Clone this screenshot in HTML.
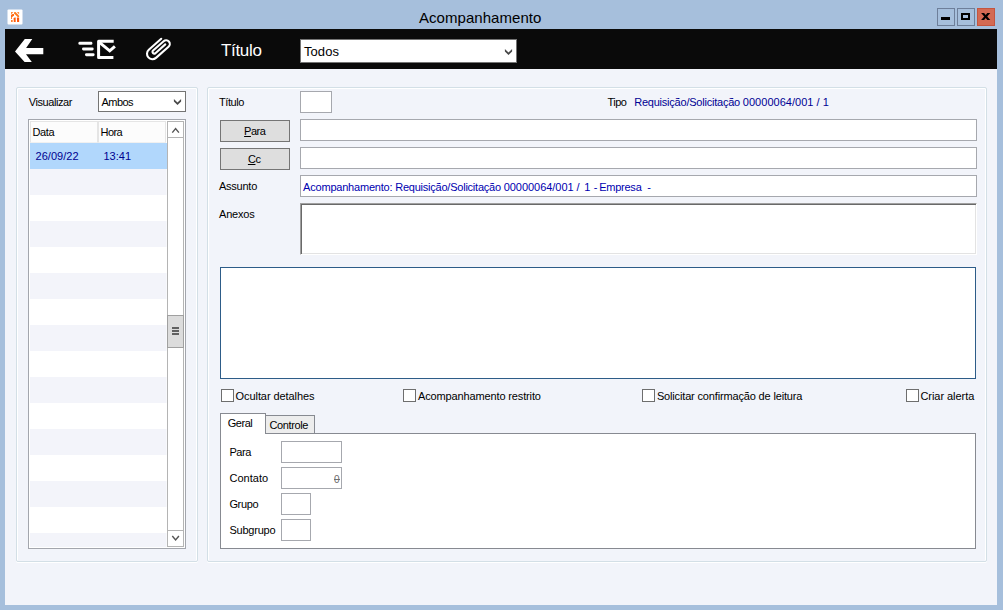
<!DOCTYPE html>
<html lang="pt-BR">
<head>
<meta charset="utf-8">
<title>Acompanhamento</title>
<style>
*{box-sizing:border-box;margin:0;padding:0}
html,body{width:1003px;height:610px;overflow:hidden;background:#a6bfdc}
body{position:relative;font-family:"Liberation Sans",sans-serif;font-size:11px;color:#000;line-height:1}
.abs{position:absolute}
.grp{position:absolute;left:0;top:0;width:0;height:0}
.t{position:absolute;white-space:pre}
#content{left:5px;top:29px;width:992px;height:576px;background:#f2f4fa}
#toolbar{left:5px;top:29px;width:992px;height:40px;background:#0a0a0a}
.wbtn{top:8px;width:18px;height:18px;border:1px solid #6e7f9a}
.inp{position:absolute;background:#fff;border:1px solid #a6a8ae}
.gb{position:absolute;border:1px solid #d3dfe6;border-radius:2px;box-shadow:inset 1px 1px 0 #fff, inset -1px 0 0 #fff, 0 1px 0 #fff}
.btn{position:absolute;background:#dedede;border:1px solid #757575}
.cb{position:absolute;width:13px;height:13px;background:#fff;border:1px solid #6e6e6e;top:389px}
.row{position:absolute;left:30px;width:136px;height:26px;background:#f3f4fa;box-shadow:1px 0 0 #f8f9fc}
.sb{position:absolute;left:167px;width:17px;background:#fff;border:1px solid #b4b4b4}
u{text-decoration:underline;text-underline-offset:1px}
</style>
</head>
<body>
<header class="grp" id="titlebar">
<svg class="abs" style="left:7px;top:9px" width="16" height="16" viewBox="0 0 16 16">
<rect x="0.5" y="0.4" width="15" height="15" rx="1" fill="#fff"/>
<g fill="#ff6a13">
<path d="M4 3 H6.4 L4 5.6 Z" fill="#ff8a3a"/>
<path d="M9.9 3 H12.1 V5.4 Z" fill="#ff8f45"/>
<path d="M7 3.2 L8.5 3 L12.1 6.7 V8 H10.7 L7 4.6 Z" fill="#ff7a1c"/>
<path d="M4 6.1 L5.6 4.9 H7 V6.2 L4.4 9 H4 Z"/>
<path d="M4 9 L5 8.6 V10 H4 Z" fill="#ff7d2e"/>
<path d="M4 11 H5.7 V13 H4 Z" fill="#ff7d2e"/>
<path d="M6.6 9.4 L7.5 8.5 H8.7 V13 H6.8 Z" fill="#ff5a0a"/>
<path d="M9.9 8.5 H12.1 V13 H10.1 Z" fill="#ff5408"/>
</g>
</svg>
<div class="t" style="left:419px;top:9px;line-height:17px;height:17px;font-size:15px;letter-spacing:0.046px;">Acompanhamento</div>
<div class="abs wbtn" style="left:937px"><div class="abs" style="left:3px;top:8px;width:9px;height:3px;background:#000"></div></div>
<div class="abs wbtn" style="left:957px"><div class="abs" style="left:3px;top:4px;width:9px;height:7px;border:2px solid #000"></div></div>
<div class="abs wbtn" style="left:977px;background:#d36a53;border-color:#c4553f">
<svg class="abs" style="left:0;top:0" width="16" height="16" viewBox="0 0 16 16"><path d="M3.1 3.9 h3 l1.6 2.1 l1.6 -2.1 h3 l-3.1 3.6 l3.1 3.6 h-3 l-1.6 -2.1 l-1.6 2.1 h-3 l3.1 -3.6 z" fill="#000"/></svg>
</div>
</header>
<div id="content" class="abs"></div>
<div id="toolbar" class="abs"></div>
<nav class="grp" id="toolbar-items">
<svg class="abs" style="left:5px;top:29px" width="200" height="40" viewBox="5 29 200 40">
<polygon fill="#fff" points="15,51.6 24.8,38.9 32.3,38.9 26.1,47.9 43.3,47.9 43.3,54.2 26,54.2 31.8,62.1 24.6,62.1"/>
<g fill="#fff">
<rect x="78.4" y="41.8" width="14" height="3" rx="1.4"/><rect x="82" y="47.5" width="11.7" height="3" rx="1.4"/><rect x="85" y="53.2" width="9.6" height="3" rx="1.4"/>
</g>
<g stroke="#fff" stroke-width="3" fill="none" stroke-linejoin="round">
<path d="M113.7 41.3 H98.6 V57.5 H113.4"/>
<path d="M99.4 42.4 L109.7 50.8 L114.9 46.3" stroke-linejoin="miter"/>
</g>
<g transform="translate(158 49) rotate(-41.6)" stroke="#fff" stroke-width="2.1" fill="none" stroke-linecap="round">
<path d="M9.2 -5.5 H-7.4 A5.4 5.4 0 0 0 -7.4 5.3 H9.4 A3.7 3.7 0 0 0 9.4 -2.1 H-4.7 A1.75 1.75 0 0 0 -4.7 1.4 H8.5"/>
</g>
</svg>
<div class="t" style="left:221px;top:41px;line-height:19px;height:19px;font-size:17px;letter-spacing:-0.322px;color:#fff;">Título</div>
<div class="abs" style="left:300px;top:39px;width:217px;height:24px;background:#fff;border:1px solid #747474"></div>
<div class="t" style="left:304px;top:44px;line-height:15px;height:15px;font-size:13px;letter-spacing:0.059px;">Todos</div>
<svg class="abs" style="left:503px;top:46px" width="12" height="12" viewBox="0 0 12 12"><polygon points="1.9,2.9 5.5,6.4 9.1,2.9 9.1,5.5 5.5,9 1.9,5.5" fill="#484848"/></svg>
</nav>
<section class="grp" id="history">
<div class="gb" style="left:16px;top:87px;width:182px;height:475px"></div>
<div class="t" style="left:28.7px;top:96px;line-height:12px;height:12px;letter-spacing:-0.410px;">Visualizar</div>
<div class="abs" style="left:98px;top:91px;width:88px;height:21px;background:#fff;border:1px solid #747474"></div>
<div class="t" style="left:101.5px;top:96px;line-height:12px;height:12px;letter-spacing:-0.550px;">Ambos</div>
<svg class="abs" style="left:172px;top:96px" width="12" height="12" viewBox="0 0 12 12"><polygon points="1.9,2.9 5.5,6.4 9.1,2.9 9.1,5.5 5.5,9 1.9,5.5" fill="#484848"/></svg>
<div class="abs" style="left:28px;top:119px;width:158px;height:430px;background:#fff;border:1px solid #a3a6ad"></div>
<div class="abs" style="left:30px;top:121px;width:68px;height:22px;background:#fcfcfc;border:1px solid #e5e5e5;border-bottom-color:#f0f0f0"></div>
<div class="abs" style="left:98px;top:121px;width:68px;height:22px;background:#fcfcfc;border:1px solid #e5e5e5;border-bottom-color:#f0f0f0"></div>
<div class="t" style="left:32.5px;top:126px;line-height:12px;height:12px;letter-spacing:-0.412px;">Data</div>
<div class="t" style="left:100.5px;top:126px;line-height:12px;height:12px;letter-spacing:-0.561px;">Hora</div>
<div class="row" style="top:143px;width:137px;background:#b1d7fc"></div>
<div class="row" style="top:169px;height:26px"></div>
<div class="row" style="top:221px;height:26px"></div>
<div class="row" style="top:273px;height:26px"></div>
<div class="row" style="top:325px;height:26px"></div>
<div class="row" style="top:377px;height:26px"></div>
<div class="row" style="top:429px;height:26px"></div>
<div class="row" style="top:481px;height:26px"></div>
<div class="row" style="top:533px;height:14px"></div>
<div class="t" style="left:35.5px;top:150px;line-height:12px;height:12px;letter-spacing:0.046px;color:#000090;">26/09/22</div>
<div class="t" style="left:103.5px;top:150px;line-height:12px;height:12px;letter-spacing:-0.006px;color:#000090;">13:41</div>
<div class="sb" style="top:121px;height:426px"></div>
<div class="sb" style="top:121px;height:17px"></div>
<div class="sb" style="top:530px;height:17px"></div>
<svg class="abs" style="left:167px;top:121px" width="17" height="17" viewBox="0 0 17 17"><path d="M5.3 11.6 L8.6 7.6 L11.9 11.6" stroke="#555" stroke-width="1.4" fill="none"/></svg>
<svg class="abs" style="left:167px;top:530px" width="17" height="17" viewBox="0 0 17 17"><path d="M5.3 6 L8.6 10 L11.9 6" stroke="#555" stroke-width="1.4" fill="none"/></svg>
<div class="abs" style="left:167px;top:315px;width:17px;height:33px;background:#dcdcdc;border:1px solid #a0a0a0"></div>
<div class="abs" style="left:172px;top:327px;width:7px;height:2px;background:#606060"></div>
<div class="abs" style="left:172px;top:330px;width:7px;height:2px;background:#606060"></div>
<div class="abs" style="left:172px;top:333px;width:7px;height:2px;background:#606060"></div>
</section>
<section class="grp" id="message">
<div class="gb" style="left:207px;top:87px;width:780px;height:475px"></div>
<div class="t" style="left:219px;top:96px;line-height:12px;height:12px;letter-spacing:-0.419px;">Título</div>
<div class="inp" style="left:300px;top:91px;width:32px;height:22px"></div>
<div class="t" style="left:607.6px;top:96px;line-height:12px;height:12px;letter-spacing:-0.550px;">Tipo</div>
<div class="t" style="left:634.2px;top:96px;line-height:12px;height:12px;color:#000094;"><span style="letter-spacing:-0.223px">Requisição/Solicitação </span><span style="letter-spacing:0.029px">00000064/001 </span><span style="letter-spacing:-0.012px">/ </span><span style="letter-spacing:-0.025px">1</span></div>
<div class="btn" style="left:220px;top:120px;width:70px;height:22px"></div>
<div class="t" style="left:244.1px;top:125px;line-height:12px;height:12px;letter-spacing:-0.513px;"><u>P</u>ara</div>
<div class="inp" style="left:300px;top:119px;width:677px;height:22px"></div>
<div class="btn" style="left:220px;top:148px;width:70px;height:22px"></div>
<div class="t" style="left:247.9px;top:153px;line-height:12px;height:12px;letter-spacing:-0.377px;"><u>C</u>c</div>
<div class="inp" style="left:300px;top:147px;width:677px;height:22px"></div>
<div class="t" style="left:219px;top:180px;line-height:12px;height:12px;letter-spacing:-0.250px;">Assunto</div>
<div class="inp" style="left:300px;top:175px;width:677px;height:22px"></div>
<div class="t" style="left:303.1px;top:181px;line-height:12px;height:12px;color:#0000b0;"><span style="letter-spacing:-0.206px">Acompanhamento: </span><span style="letter-spacing:-0.228px">Requisição/Solicitação </span><span style="letter-spacing:-0.040px">00000064/001 </span><span style="letter-spacing:0.787px">/ </span><span style="letter-spacing:0.156px">1 </span><span style="letter-spacing:-0.667px">- </span><span style="letter-spacing:-0.238px">Empresa  </span><span style="letter-spacing:0.028px">-</span></div>
<div class="t" style="left:219px;top:208px;line-height:12px;height:12px;letter-spacing:-0.201px;">Anexos</div>
<div class="abs" style="left:300px;top:203px;width:677px;height:52px;background:#fff;border:1px solid;border-color:#a0a0a0 #fff #fff #a0a0a0;box-shadow:inset 1px 1px 0 #696969, inset -1px -1px 0 #e3e3e3"></div>
<div class="abs" style="left:220px;top:267px;width:756px;height:112px;background:#fff;border:1px solid #2d5c88"></div>
<div class="cb" style="left:221px"></div>
<div class="t" style="left:235.6px;top:390px;line-height:12px;height:12px;letter-spacing:-0.082px;">Ocultar detalhes</div>
<div class="cb" style="left:403px"></div>
<div class="t" style="left:418px;top:390px;line-height:12px;height:12px;letter-spacing:-0.137px;">Acompanhamento restrito</div>
<div class="cb" style="left:642px"></div>
<div class="t" style="left:656.9px;top:390px;line-height:12px;height:12px;letter-spacing:-0.156px;">Solicitar confirmação de leitura</div>
<div class="cb" style="left:906px"></div>
<div class="t" style="left:920.4px;top:390px;line-height:12px;height:12px;letter-spacing:-0.042px;">Criar alerta</div>
<div class="abs" style="left:220px;top:433px;width:756px;height:116px;background:#fff;border:1px solid #878a91"></div>
<div class="abs" style="left:265px;top:415px;width:50px;height:19px;background:#ededed;border:1px solid #878a91"></div>
<div class="abs" style="left:220px;top:413px;width:46px;height:21px;background:#fff;border:1px solid #878a91;border-bottom:0"></div>
<div class="t" style="left:227.7px;top:417px;line-height:12px;height:12px;letter-spacing:-0.461px;">Geral</div>
<div class="t" style="left:269.5px;top:419px;line-height:12px;height:12px;letter-spacing:-0.385px;">Controle</div>
<div class="t" style="left:229.4px;top:446px;line-height:12px;height:12px;letter-spacing:-0.388px;">Para</div>
<div class="inp" style="left:281px;top:441px;width:61px;height:22px"></div>
<div class="t" style="left:229.4px;top:472px;line-height:12px;height:12px;letter-spacing:0.053px;">Contato</div>
<div class="inp" style="left:281px;top:467px;width:61px;height:22px"></div>
<div class="t" style="left:229.4px;top:498px;line-height:12px;height:12px;letter-spacing:-0.356px;">Grupo</div>
<div class="inp" style="left:281px;top:493px;width:30px;height:22px"></div>
<div class="t" style="left:229.4px;top:524px;line-height:12px;height:12px;letter-spacing:-0.215px;">Subgrupo</div>
<div class="inp" style="left:281px;top:519px;width:30px;height:22px"></div>
<div class="t" style="left:334px;top:474px;line-height:11px;height:11px;font-size:10px;color:#6c6c6c;">0</div>
<div class="abs" style="left:334px;top:479px;width:6px;height:1px;background:#707070"></div>
</section>
</body>
</html>
